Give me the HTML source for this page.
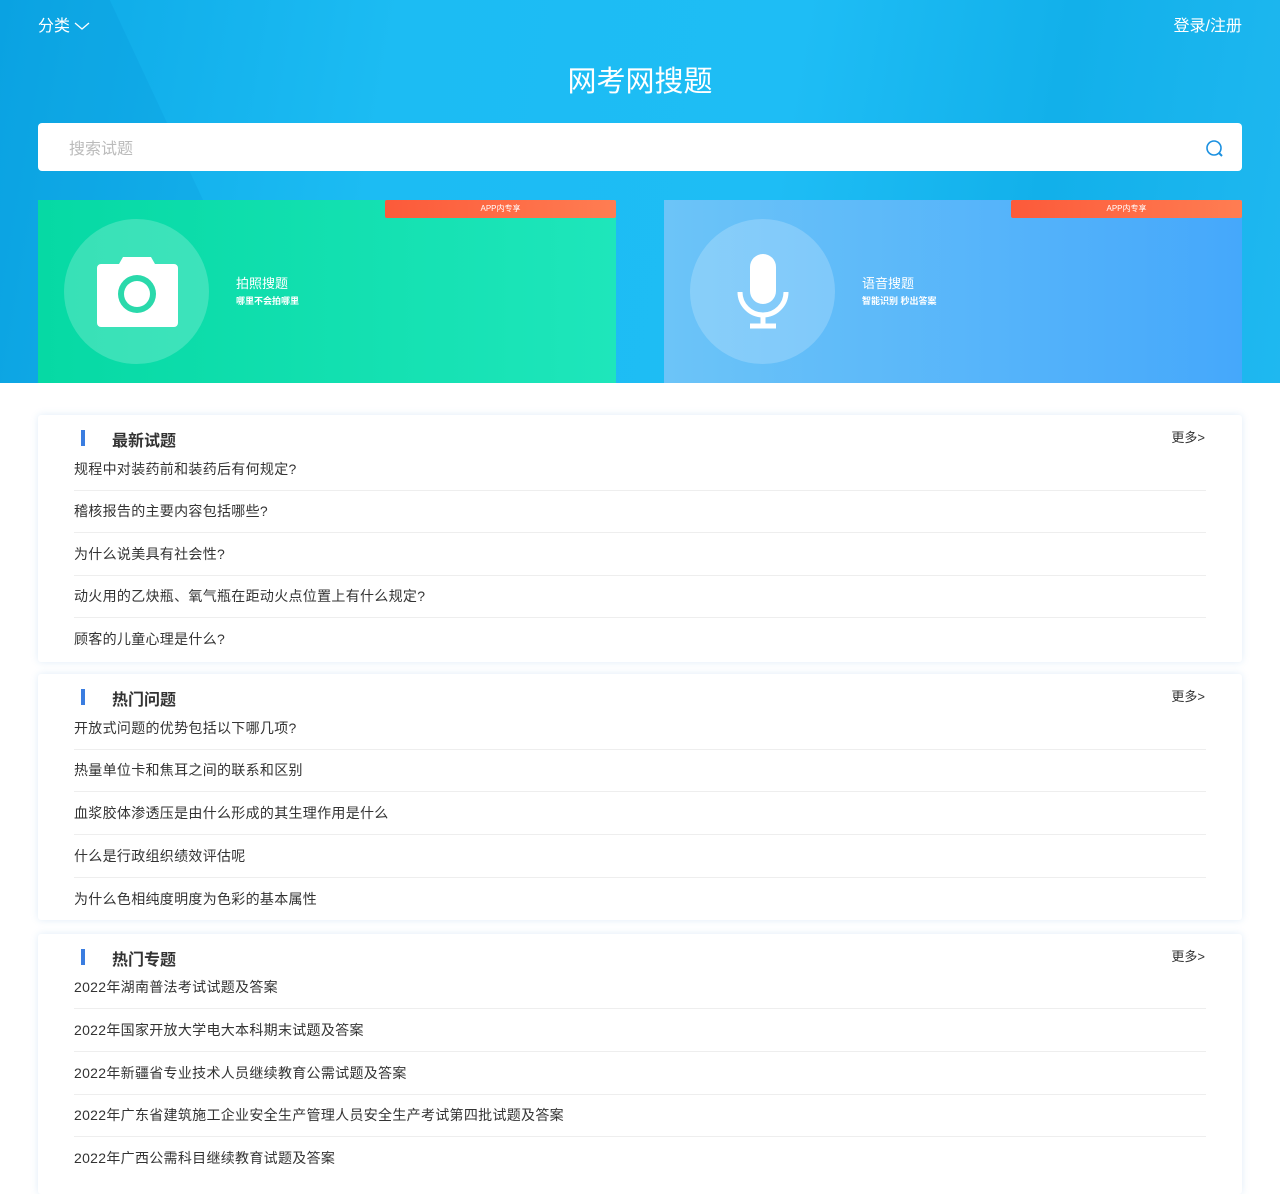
<!DOCTYPE html>
<html><head><meta charset="utf-8"><style>
*{margin:0;padding:0;box-sizing:border-box}
body{width:1280px;height:1167px;overflow:hidden;background:#fff;font-family:"Liberation Sans","Noto Sans CJK SC",sans-serif;color:#333}
.hd{position:absolute;left:0;top:0;width:1280px;height:383px;background:linear-gradient(100deg,#0ca8e6 0%,#1cbcf3 30%,#1ebdf5 60%,#12b0ea 80%,#1fb8f0 100%);overflow:hidden}
.hd .dk{position:absolute;left:-150px;top:-50px;width:380px;height:700px;background:rgba(0,120,200,.12);transform:rotate(-25deg)}
.cat{position:absolute;left:38px;top:12px;color:#fff;font-size:16px}
.login{position:absolute;right:38px;top:12px;color:#fff;font-size:16px}
.title{position:absolute;left:0;width:1280px;top:58px;text-align:center;color:#fff;font-size:29px}
.sb{position:absolute;left:38px;top:123px;width:1204px;height:48px;background:#fff;border-radius:4px}
.sb span{position:absolute;left:31px;top:12px;color:#bbb;font-size:16px}
.c{position:absolute;top:200px;width:578px;height:183px}
.c1{left:38px;background:linear-gradient(90deg,#06d9a4,#1ee6bb)}
.c2{left:664px;background:linear-gradient(90deg,#6cc4f8,#45a8fb)}
.tag{position:absolute;right:0;top:0;width:231px;height:18px;background:linear-gradient(90deg,#fc5a3a,#ff7d52);color:#fff;font-size:8px;text-align:center;line-height:18px;border-radius:2px}
.circ{position:absolute;left:26px;top:19px;width:145px;height:145px;border-radius:50%;background:rgba(255,255,255,.2)}
.ct{position:absolute;left:198px;top:76px;color:#fff;font-size:13px;line-height:16px}
.ct small{display:block;font-size:9px;line-height:12px;margin-top:3px;font-weight:bold}
.box{position:absolute;left:38px;width:1204px;background:#fff;box-shadow:0 0 8px rgba(100,160,220,.2);border-radius:3px}
.bt{position:absolute;left:74px;top:12px;font-size:16px;font-weight:bold;color:#333}
.bt:before{content:"";position:absolute;left:-31px;top:3px;width:4px;height:16px;background:#3a7de0}
.more{position:absolute;right:37px;top:12px;font-size:13px}
.li{position:absolute;left:36px;width:1132px;height:43px;font-size:14px;letter-spacing:.3px;border-bottom:1px solid #eee;line-height:42px}
</style></head><body>
<div class="hd"><div class="dk"></div>
<div class="cat">分类 <svg width="16" height="10" viewBox="0 0 16 10"><path d="M1 2l7 6 7-6" fill="none" stroke="#fff" stroke-width="1.3"/></svg></div>
<div class="login">登录/注册</div>
<div class="title">网考网搜题</div>
<div class="sb"><span>搜索试题</span><svg style="position:absolute;right:17px;top:16px" width="20" height="20" viewBox="0 0 20 20"><circle cx="9" cy="9" r="7" fill="none" stroke="#1a90e0" stroke-width="1.6"/><path d="M14 14l3 3" stroke="#1a90e0" stroke-width="2"/></svg></div>
<div class="c c1"><div class="tag">APP内专享</div><div class="circ"><svg style="position:absolute;left:33px;top:37px" width="81" height="71" viewBox="0 0 81 71"><path d="M22 8l4-7h28l4 7h19a4 4 0 0 1 4 4v55a4 4 0 0 1-4 4H4a4 4 0 0 1-4-4V12a4 4 0 0 1 4-4z" fill="#fff"/><circle cx="40" cy="38" r="19" fill="#2ad9ab"/><circle cx="40" cy="38" r="13" fill="#fff"/></svg></div><div class="ct">拍照搜题<small>哪里不会拍哪里</small></div></div>
<div class="c c2"><div class="tag">APP内专享</div><div class="circ"><svg style="position:absolute;left:46px;top:35px" width="54" height="76" viewBox="0 0 54 76"><rect x="14" y="0" width="26" height="50" rx="13" fill="#fff"/><path d="M4 38a23 23 0 0 0 46 0" fill="none" stroke="#fff" stroke-width="5"/><path d="M27 61v10M14 72h26" stroke="#fff" stroke-width="5"/></svg></div><div class="ct">语音搜题<small>智能识别 秒出答案</small></div></div>
</div>

<div class="box" style="top:415px;height:247px"><div class="bt">最新试题</div><div class="more">更多&gt;</div>
<div class="li" style="top:33px">规程中对装药前和装药后有何规定?</div>
<div class="li" style="top:75px">稽核报告的主要内容包括哪些?</div>
<div class="li" style="top:118px">为什么说美具有社会性?</div>
<div class="li" style="top:160px">动火用的乙炔瓶、氧气瓶在距动火点位置上有什么规定?</div>
<div class="li" style="top:203px;border:0">顾客的儿童心理是什么?</div></div>

<div class="box" style="top:674px;height:246px"><div class="bt">热门问题</div><div class="more">更多&gt;</div>
<div class="li" style="top:33px">开放式问题的优势包括以下哪几项?</div>
<div class="li" style="top:75px">热量单位卡和焦耳之间的联系和区别</div>
<div class="li" style="top:118px">血浆胶体渗透压是由什么形成的其生理作用是什么</div>
<div class="li" style="top:161px">什么是行政组织绩效评估呢</div>
<div class="li" style="top:204px;border:0">为什么色相纯度明度为色彩的基本属性</div></div>

<div class="box" style="top:934px;height:260px"><div class="bt">热门专题</div><div class="more">更多&gt;</div>
<div class="li" style="top:32px">2022年湖南普法考试试题及答案</div>
<div class="li" style="top:75px">2022年国家开放大学电大本科期末试题及答案</div>
<div class="li" style="top:118px">2022年新疆省专业技术人员继续教育公需试题及答案</div>
<div class="li" style="top:160px">2022年广东省建筑施工企业安全生产管理人员安全生产考试第四批试题及答案</div>
<div class="li" style="top:203px;border:0">2022年广西公需科目继续教育试题及答案</div></div>
</body></html>
